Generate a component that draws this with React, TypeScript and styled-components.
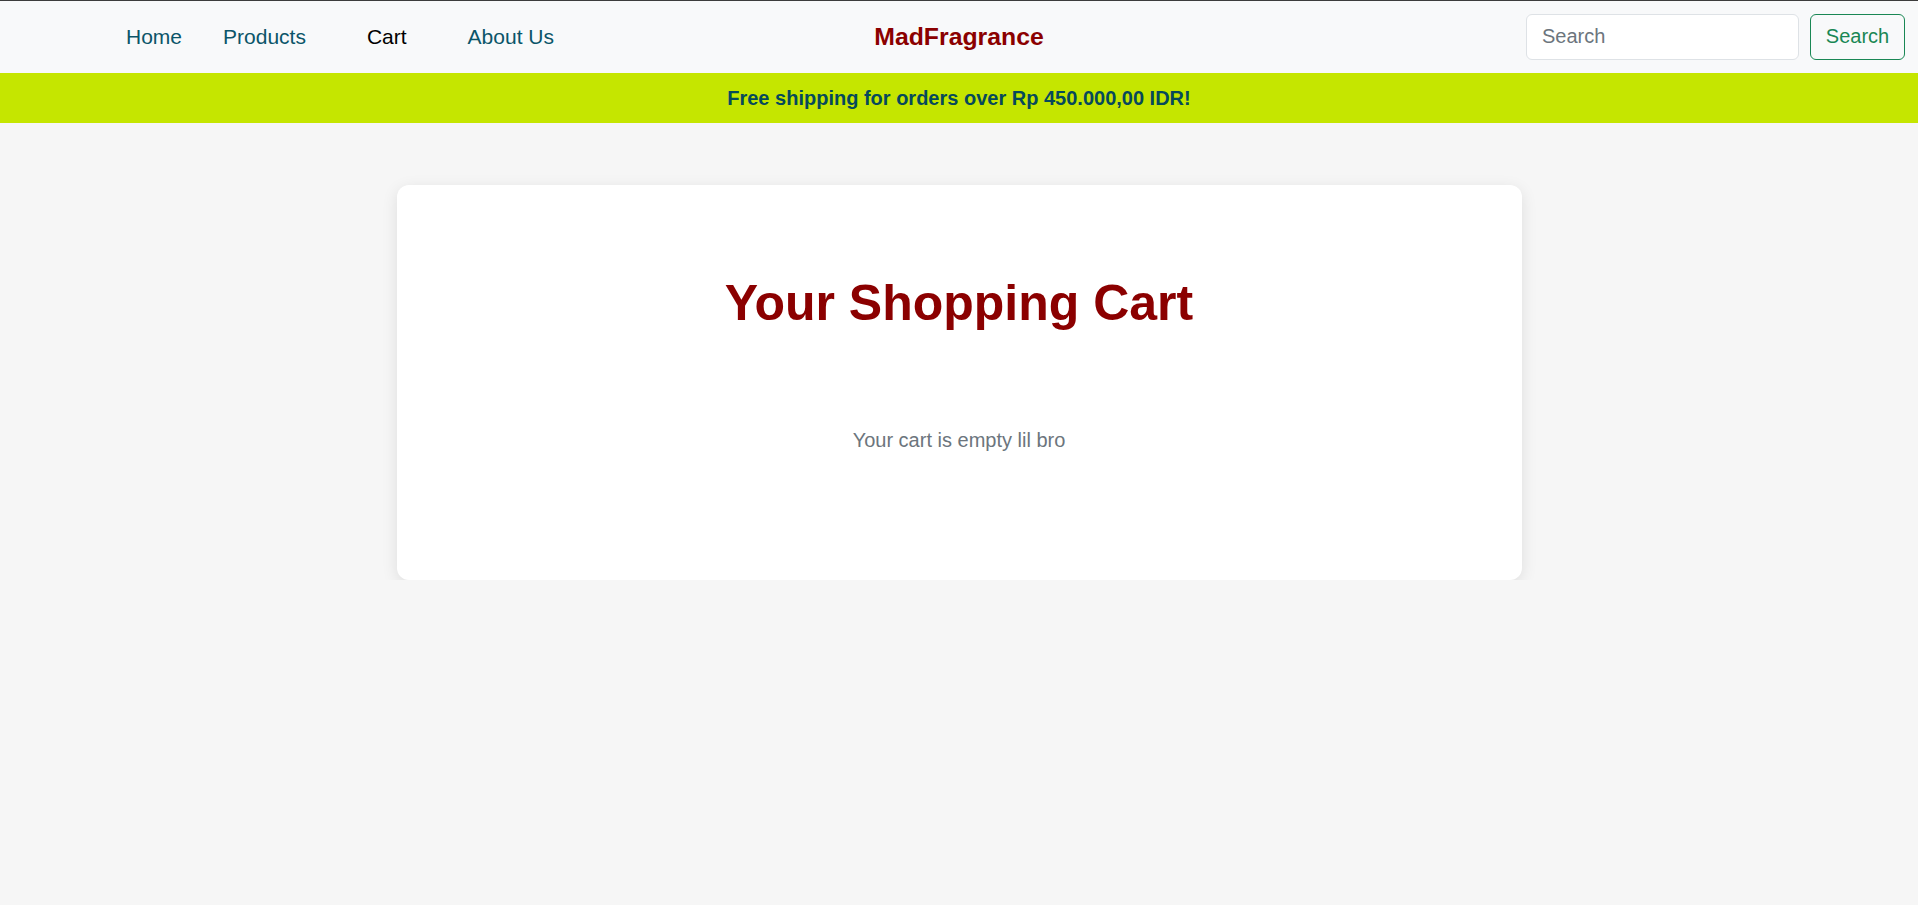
import React from "react";
import styled, { createGlobalStyle } from "styled-components";

const GlobalStyle = createGlobalStyle`
  * { box-sizing: border-box; }
  body {
    margin: 0;
    background: #f6f6f6;
    font-family: "Liberation Sans", Arial, sans-serif;
    border-top: 1px solid #3c3c3c;
  }
`;

const Navbar = styled.nav`
  display: grid;
  grid-template-columns: 1fr auto 1fr;
  align-items: center;
  height: 72px;
  background: #f8f9fa;
`;

const NavLinks = styled.ul`
  display: flex;
  align-items: center;
  list-style: none;
  margin: -1px 0 0;
  padding: 0 0 0 126px;
  gap: 41px;
`;

const NavLink = styled.a<{ $active?: boolean }>`
  font-size: 21px;
  line-height: 1;
  text-decoration: none;
  color: ${p => (p.$active ? "#000" : "#0b5569")};
  margin: ${p => (p.$active ? "0 20px" : "0")};
  cursor: pointer;
`;

const Brand = styled.a`
  font-size: 24.8px;
  font-weight: 700;
  color: #8b0000;
  text-decoration: none;
`;

const SearchForm = styled.form`
  display: flex;
  justify-content: flex-end;
  align-items: center;
  gap: 11px;
  padding-right: 13px;
  margin-top: -1px;
`;

const SearchInput = styled.input`
  width: 273px;
  height: 46px;
  padding: 0 15px;
  border: 1px solid #dee2e6;
  border-radius: 6px;
  background: #fff;
  font-family: inherit;
  font-size: 20px;
  color: #212529;

  &::placeholder {
    color: #6c757d;
  }
`;

const SearchButton = styled.button`
  width: 95px;
  height: 46px;
  padding: 0;
  border: 1px solid #198754;
  border-radius: 6px;
  background: transparent;
  color: #198754;
  font-family: inherit;
  font-size: 20px;
  cursor: pointer;
`;

const Banner = styled.div`
  display: flex;
  align-items: center;
  justify-content: center;
  height: 50px;
  background: #c5e600;
  color: #06495b;
  font-size: 20px;
  font-weight: 700;
`;

const Main = styled.main`
  display: flex;
  justify-content: center;
  padding-top: 62px;
`;

const Card = styled.section`
  width: 1125px;
  height: 395px;
  padding: 88px 24px 0;
  background: #fff;
  border-radius: 12px;
  box-shadow: 0 4px 16px rgba(0, 0, 0, 0.1);
  text-align: center;
`;

const Title = styled.h1`
  margin: 0 0 92px;
  font-size: 50px;
  line-height: 60px;
  font-weight: 700;
  color: #8b0000;
`;

const Lead = styled.p`
  margin: 0;
  font-size: 20px;
  line-height: 30px;
  color: #6c757d;
`;

const App: React.FC = () => {
  return (
    <>
      <GlobalStyle />
      <Navbar>
        <NavLinks>
          <li><NavLink>Home</NavLink></li>
          <li><NavLink>Products</NavLink></li>
          <li><NavLink $active>Cart</NavLink></li>
          <li><NavLink>About Us</NavLink></li>
        </NavLinks>
        <Brand>MadFragrance</Brand>
        <SearchForm onSubmit={e => e.preventDefault()}>
          <SearchInput type="search" placeholder="Search" />
          <SearchButton type="submit">Search</SearchButton>
        </SearchForm>
      </Navbar>
      <Banner>Free shipping for orders over Rp 450.000,00 IDR!</Banner>
      <Main>
        <Card>
          <Title>Your Shopping Cart</Title>
          <Lead>Your cart is empty lil bro</Lead>
        </Card>
      </Main>
    </>
  );
};

export default App;
